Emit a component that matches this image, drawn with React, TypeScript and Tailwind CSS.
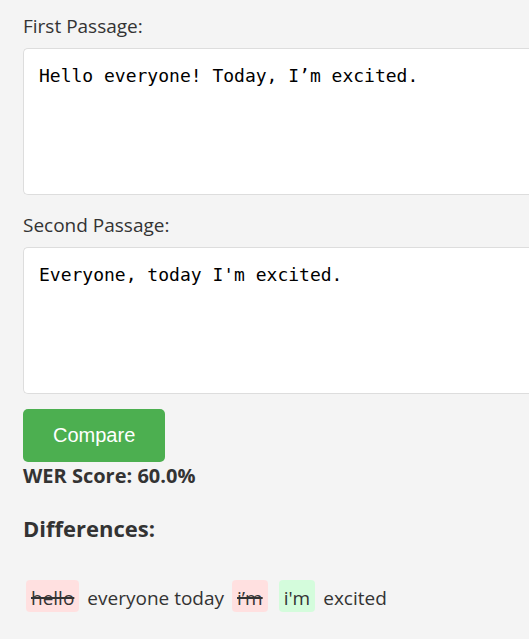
import { useState } from "react";

type Part = { text: string; kind: "removed" | "added" | "same" };

const parts: Part[] = [
  { text: "hello", kind: "removed" },
  { text: "everyone today", kind: "same" },
  { text: "i’m", kind: "removed" },
  { text: "i'm", kind: "added" },
  { text: "excited", kind: "same" },
];

const styles = {
  removed: "pt-1 mx-[3px] rounded px-[5px] bg-[#ffe0e0] line-through decoration-2",
  added: "pt-1 mx-[3px] rounded px-[5px] bg-[#d4fcdc]",
  same: "pt-1",
};

function Passage({ id, label, initial }: { id: string; label: string; initial: string }) {
  const [value, setValue] = useState(initial);
  return (
    <div className="flex flex-col">
      <label htmlFor={id} className="mb-2">
        {label}
      </label>
      <textarea
        id={id}
        value={value}
        onChange={(e) => setValue(e.target.value)}
        spellCheck={false}
        className="h-[147px] resize-none rounded-l-[5px] border border-r-0 border-[#dddddd] bg-white p-[15px] font-['DejaVu_Sans_Mono','Liberation_Mono',monospace] text-lg leading-6 text-black outline-none"
      />
    </div>
  );
}

export default function App() {
  return (
    <main className="min-h-screen bg-[#f4f4f4] pt-3 pb-6 pl-[23px] font-['Open_Sans','Noto_Sans',sans-serif] text-[19px] leading-7 text-[#333333]">
      <div className="flex flex-col gap-4">
        <Passage id="first" label="First Passage:" initial="Hello everyone! Today, I’m excited." />
        <Passage id="second" label="Second Passage:" initial="Everyone, today I'm excited." />
      </div>
      <button
        type="button"
        className="mt-[15px] block h-[53px] rounded-[5px] bg-[#4caf50] px-[30px] pb-0.5 font-['Liberation_Sans',Arial,sans-serif] text-xl text-white"
      >
        Compare
      </button>
      <p className="text-[20px] font-bold">WER Score: 60.0%</p>
      <h2 className="mt-6 text-[22px] font-bold">Differences:</h2>
      <p className="mt-[38px] flex flex-wrap gap-[5px]">
        {parts.map((part, i) => (
          <span key={i} className={styles[part.kind]}>
            {part.text}
          </span>
        ))}
      </p>
    </main>
  );
}
